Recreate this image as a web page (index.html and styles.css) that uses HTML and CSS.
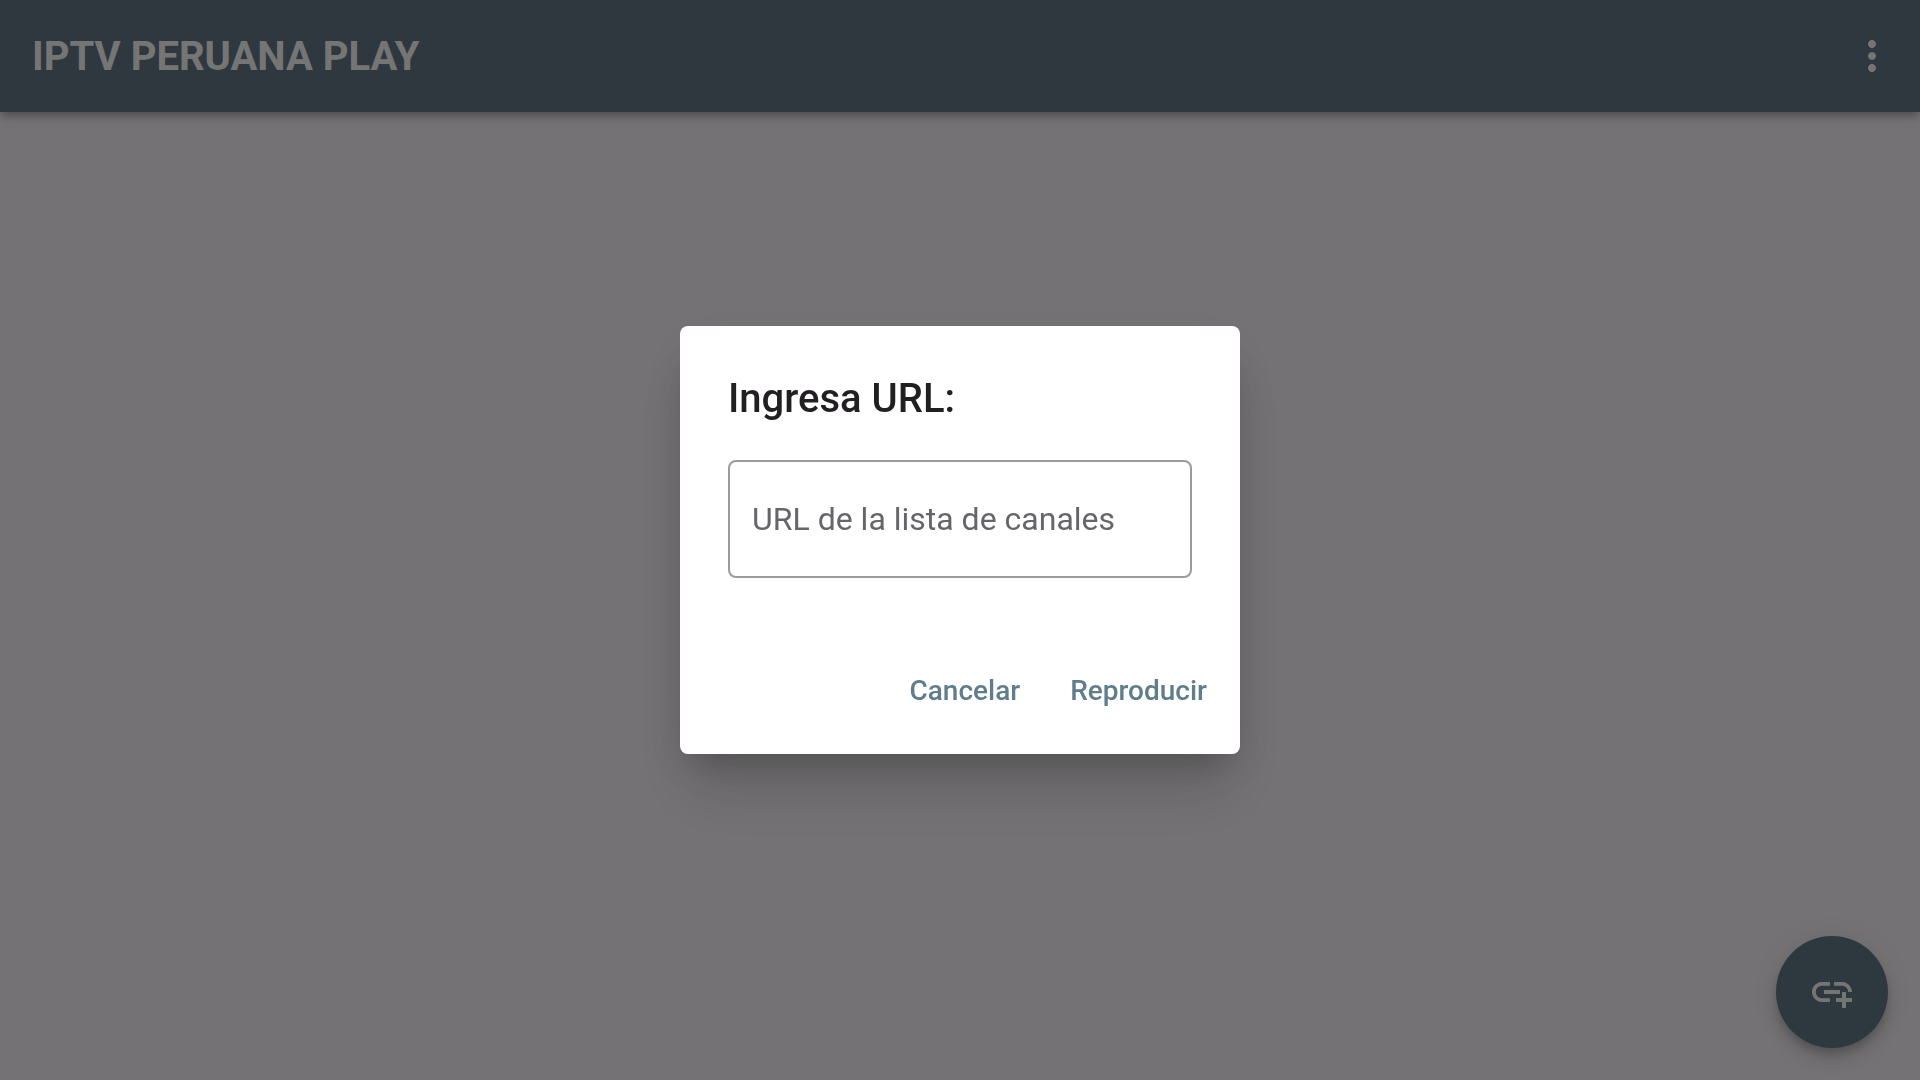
FILE: index.html
```html
<!DOCTYPE html>
<html lang="es">

<head>
    <meta charset="UTF-8">
    <meta name="viewport" content="width=device-width, initial-scale=1.0">
    <title>IPTV PERUANA PLAY</title>
    <link rel="stylesheet" href="styles.css">
</head>

<body>
    <header class="appbar">
        <h1 class="appbar-title">IPTV PERUANA PLAY</h1>
        <button type="button" class="icon-button" aria-label="Más opciones">
            <svg class="icon" viewBox="0 0 24 24">
                <path d="M12 8c1.1 0 2-.9 2-2s-.9-2-2-2-2 .9-2 2 .9 2 2 2zm0 2c-1.1 0-2 .9-2 2s.9 2 2 2 2-.9 2-2-.9-2-2-2zm0 6c-1.1 0-2 .9-2 2s.9 2 2 2 2-.9 2-2-.9-2-2-2z" />
            </svg>
        </button>
    </header>

    <main class="content"></main>

    <button type="button" class="fab" aria-label="Agregar URL">
        <svg class="icon" viewBox="0 0 24 24">
            <path d="M8 11h8v2H8v-2zm12.1 1H22c0-2.76-2.24-5-5-5h-4v1.9h4c1.71 0 3.1 1.39 3.1 3.1zM3.9 12c0-1.71 1.39-3.1 3.1-3.1h4V7H7c-2.76 0-5 2.24-5 5s2.24 5 5 5h4v-1.9H7c-1.71 0-3.1-1.39-3.1-3.1zM19 12h-2v3h-3v2h3v3h2v-3h3v-2h-3v-3z" />
        </svg>
    </button>

    <div class="scrim">
        <form class="dialog" role="dialog" aria-labelledby="dialog-title">
            <h2 class="dialog-title" id="dialog-title">Ingresa URL:</h2>
            <div class="field">
                <input type="text" class="field-input" id="url" placeholder=" ">
                <label class="field-label" for="url">URL de la lista de canales</label>
            </div>
            <div class="dialog-actions">
                <button type="button" class="text-button">Cancelar</button>
                <button type="submit" class="text-button">Reproducir</button>
            </div>
        </form>
    </div>
</body>

</html>
```

FILE: styles.css
```css
* {
    margin: 0;
    padding: 0;
    box-sizing: border-box;
}

body {
    display: flex;
    flex-direction: column;
    min-height: 100vh;
    font-family: Roboto, "Liberation Sans", sans-serif;
    background: #fcf8fc;
}

button {
    font-family: inherit;
    cursor: pointer;
    border: none;
    background: none;
}

/* top bar */
.appbar {
    display: flex;
    align-items: center;
    justify-content: space-between;
    height: 112px;
    padding: 0 0 0 32px;
    color: #fff;
    background: #667a88;
    box-shadow: 0 4px 8px -2px rgba(0, 0, 0, .2), 0 6px 8px rgba(0, 0, 0, .1), 0 2px 16px rgba(0, 0, 0, .1);
}

.appbar-title {
    font-size: 40px;
    font-weight: bold;
}

.icon-button {
    display: flex;
    align-items: center;
    justify-content: center;
    width: 96px;
    height: 96px;
    color: #fff;
}

.icon {
    width: 48px;
    height: 48px;
    fill: currentColor;
}

.content {
    flex: 1;
}

.fab {
    position: fixed;
    right: 32px;
    bottom: 32px;
    display: flex;
    align-items: center;
    justify-content: center;
    width: 112px;
    height: 112px;
    color: #fff;
    border-radius: 50%;
    background: #637b89;
    box-shadow: 0 6px 10px -2px rgba(0, 0, 0, .18), 0 12px 18px rgba(0, 0, 0, .12), 0 2px 28px rgba(0, 0, 0, .08);
}

/* dialog */
.scrim {
    position: fixed;
    top: 0;
    right: 0;
    bottom: 0;
    left: 0;
    display: flex;
    align-items: center;
    justify-content: center;
    background: rgba(0, 0, 0, .54);
}

.dialog {
    min-width: 560px;
    border-radius: 8px;
    background: #fff;
    box-shadow: 0 22px 30px -14px rgba(0, 0, 0, .18), 0 44px 64px rgba(0, 0, 0, .1), 0 18px 64px rgba(0, 0, 0, .08);
}

.dialog-title {
    padding: 48px 48px 0;
    font-size: 40px;
    font-weight: 500;
    line-height: 50px;
    color: #211f22;
}

/* label and input share one cell */
.field {
    display: grid;
    align-items: center;
    margin: 36px 48px 48px;
}

.field-input,
.field-label {
    grid-area: 1 / 1;
    font-size: 32px;
}

.field-input {
    width: 100%;
    height: 118px;
    padding: 0 24px;
    font-family: inherit;
    color: #211f22;
    border: 2px solid #9c9b9d;
    border-radius: 8px;
    outline: none;
    background: none;
}

.field-label {
    padding: 0 24px;
    pointer-events: none;
    color: #676569;
}

.field-input:not(:placeholder-shown) + .field-label {
    visibility: hidden;
}

.dialog-actions {
    display: flex;
    justify-content: flex-end;
    gap: 16px;
    padding: 16px;
}

.text-button {
    height: 96px;
    padding: 0 17px;
    font-size: 28px;
    font-weight: 500;
    color: #607d8b;
}
```
